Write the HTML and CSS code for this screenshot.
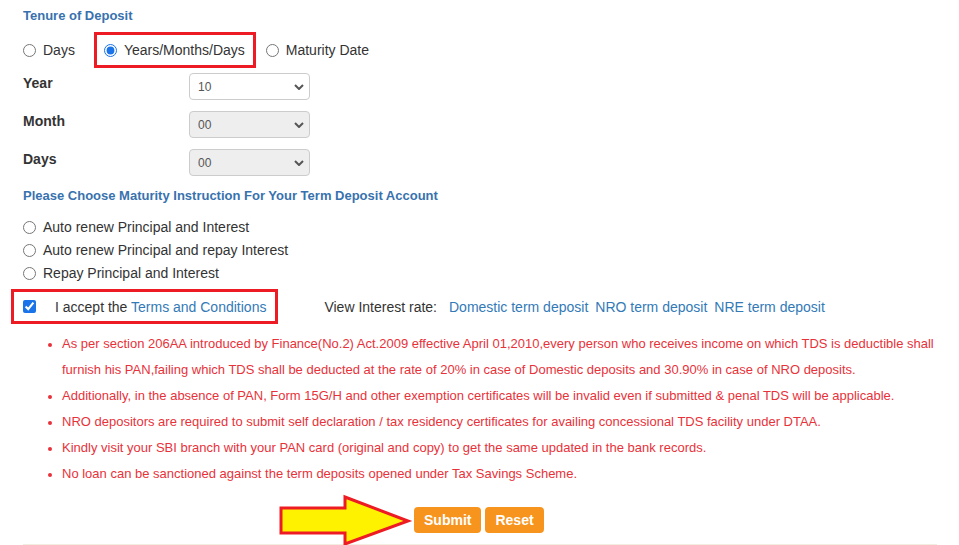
FILE: index.html
```html
<!DOCTYPE html>
<html>
<head>
<meta charset="utf-8">
<title>Term Deposit</title>
<link rel="stylesheet" href="styles.css">
</head>
<body>
<div class="page">
  <h4 class="section-title">Tenure of Deposit</h4>
  <div class="tenure-row">
    <label class="radio-item"><input type="radio" name="tenure"><span>Days</span></label>
    <label class="radio-item highlight hl-tenure"><input type="radio" name="tenure" checked><span>Years/Months/Days</span></label>
    <label class="radio-item"><input type="radio" name="tenure"><span>Maturity Date</span></label>
  </div>

  <div class="field-row">
    <span class="field-label">Year</span>
    <div class="select-wrap">
      <select class="select"><option>10</option></select>
      <svg class="chev" viewBox="0 0 10 6" width="10" height="6"><path d="M1 1 L5 5 L9 1" fill="none" stroke="#555" stroke-width="2"/></svg>
    </div>
  </div>
  <div class="field-row">
    <span class="field-label">Month</span>
    <div class="select-wrap">
      <select class="select" disabled><option>00</option></select>
      <svg class="chev" viewBox="0 0 10 6" width="10" height="6"><path d="M1 1 L5 5 L9 1" fill="none" stroke="#555" stroke-width="2"/></svg>
    </div>
  </div>
  <div class="field-row">
    <span class="field-label">Days</span>
    <div class="select-wrap">
      <select class="select" disabled><option>00</option></select>
      <svg class="chev" viewBox="0 0 10 6" width="10" height="6"><path d="M1 1 L5 5 L9 1" fill="none" stroke="#555" stroke-width="2"/></svg>
    </div>
  </div>

  <h4 class="section-title title-2">Please Choose Maturity Instruction For Your Term Deposit Account</h4>
  <div class="radio-list">
    <label class="radio-item"><input type="radio" name="mat"><span>Auto renew Principal and Interest</span></label>
    <label class="radio-item"><input type="radio" name="mat"><span>Auto renew Principal and repay Interest</span></label>
    <label class="radio-item"><input type="radio" name="mat"><span>Repay Principal and Interest</span></label>
  </div>

  <div class="accept-row">
    <label class="highlight hl-accept"><input type="checkbox" class="check" checked><span>I accept the <a href="#" class="link">Terms and Conditions</a></span></label>
    <div class="rates">
      <span class="rates-label">View Interest rate:</span>
      <a href="#" class="link">Domestic term deposit</a>
      <a href="#" class="link">NRO term deposit</a>
      <a href="#" class="link">NRE term deposit</a>
    </div>
  </div>

  <ul class="notes">
    <li>As per section 206AA introduced by Finance(No.2) Act.2009 effective April 01,2010,every person who receives income on which TDS is deductible shall furnish his PAN,failing which TDS shall be deducted at the rate of 20% in case of Domestic deposits and 30.90% in case of NRO deposits.</li>
    <li>Additionally, in the absence of PAN, Form 15G/H and other exemption certificates will be invalid even if submitted &amp; penal TDS will be applicable.</li>
    <li>NRO depositors are required to submit self declaration / tax residency certificates for availing concessional TDS facility under DTAA.</li>
    <li>Kindly visit your SBI branch with your PAN card (original and copy) to get the same updated in the bank records.</li>
    <li>No loan can be sanctioned against the term deposits opened under Tax Savings Scheme.</li>
  </ul>

  <div class="actions">
    <svg class="arrow" width="134" height="50" viewBox="0 0 134 50">
      <polygon points="3,13 67,13 67,2 130,26 67,49 67,38 3,38" fill="#fff200" stroke="#ed1c24" stroke-width="3" stroke-linejoin="miter"/>
    </svg>
    <button class="btn">Submit</button>
    <button class="btn">Reset</button>
  </div>
  <div class="divider"></div>
</div>
</body>
</html>
```

FILE: styles.css
```css
html, body {
  margin: 0;
  padding: 0;
  background: #fff;
}
body {
  font-family: "Liberation Sans", Arial, sans-serif;
  font-size: 14px;
  color: #333;
}
.page {
  padding: 6px 22px 0 23px;
  width: 914px;
}
.section-title {
  margin: 0;
  font-size: 13px;
  line-height: 20px;
  font-weight: bold;
  color: #3872ae;
}
.title-2 {
  margin-top: 10px;
}
.tenure-row {
  display: flex;
  align-items: center;
  margin-top: 6px;
  height: 36px;
}
.radio-item {
  display: flex;
  align-items: center;
  gap: 7px;
  line-height: 20px;
}
.radio-item input {
  margin: 0;
  width: 13px;
  height: 13px;
  accent-color: #1a73e8;
}
.highlight {
  border: 3px solid #ed1c24;
  box-sizing: border-box;
}
.hl-tenure {
  height: 36px;
  margin-left: 19px;
  margin-right: 10px;
  padding: 0 8px 0 7px;
}
.field-row {
  display: flex;
  align-items: flex-start;
  margin-top: 5px;
}
.field-row + .field-row {
  margin-top: 11px;
}
.field-label {
  width: 166px;
  font-weight: bold;
  line-height: 20px;
}
.select-wrap {
  position: relative;
  width: 121px;
  height: 27px;
}
.select {
  appearance: none;
  -webkit-appearance: none;
  width: 121px;
  height: 27px;
  box-sizing: border-box;
  border: 1px solid #ccc;
  border-radius: 4px;
  background: #fff;
  font-family: "Liberation Sans", Arial, sans-serif;
  font-size: 12px;
  color: #555;
  padding: 0 0 0 8px;
  margin: 0;
}
.select:disabled {
  background: #eee;
  color: #555;
  opacity: 1;
}
.chev {
  position: absolute;
  right: 6px;
  top: 11px;
  pointer-events: none;
}
.radio-list {
  margin-top: 10px;
}
.radio-list .radio-item {
  height: 23px;
  line-height: 23px;
}
.accept-row {
  display: flex;
  align-items: center;
  margin-top: 4px;
  margin-left: -12px;
}
.hl-accept {
  display: flex;
  align-items: center;
  height: 35px;
  padding: 0 9px 0 9px;
  gap: 19px;
}
.check {
  margin: 0;
  width: 13px;
  height: 13px;
  accent-color: #1a73e8;
}
.link {
  color: #337ab7;
  text-decoration: none;
}
.rates {
  display: flex;
  align-items: center;
  margin-left: 46px;
}
.rates-label {
  margin-right: 12px;
}
.rates .link + .link {
  margin-left: 7px;
}
.notes {
  margin: 7px 0 0 0;
  padding: 0 0 0 39px;
  color: #e8323a;
  font-size: 13px;
  line-height: 26px;
  list-style: disc;
}
.notes li::marker {
  font-size: 12px;
}
.actions {
  display: flex;
  align-items: center;
  margin-top: 9px;
  height: 48px;
  padding-left: 255px;
}
.arrow {
  display: block;
  overflow: visible;
  margin-right: 2px;
}
.btn {
  height: 26px;
  padding: 0 10px;
  margin: 0 4px 0 0;
  border: 0;
  border-radius: 4px;
  background: #f7941d;
  color: #fff;
  font-family: "Liberation Sans", Arial, sans-serif;
  font-size: 14px;
  font-weight: bold;
}
.divider {
  height: 1px;
  background: #f3ede0;
}
```
